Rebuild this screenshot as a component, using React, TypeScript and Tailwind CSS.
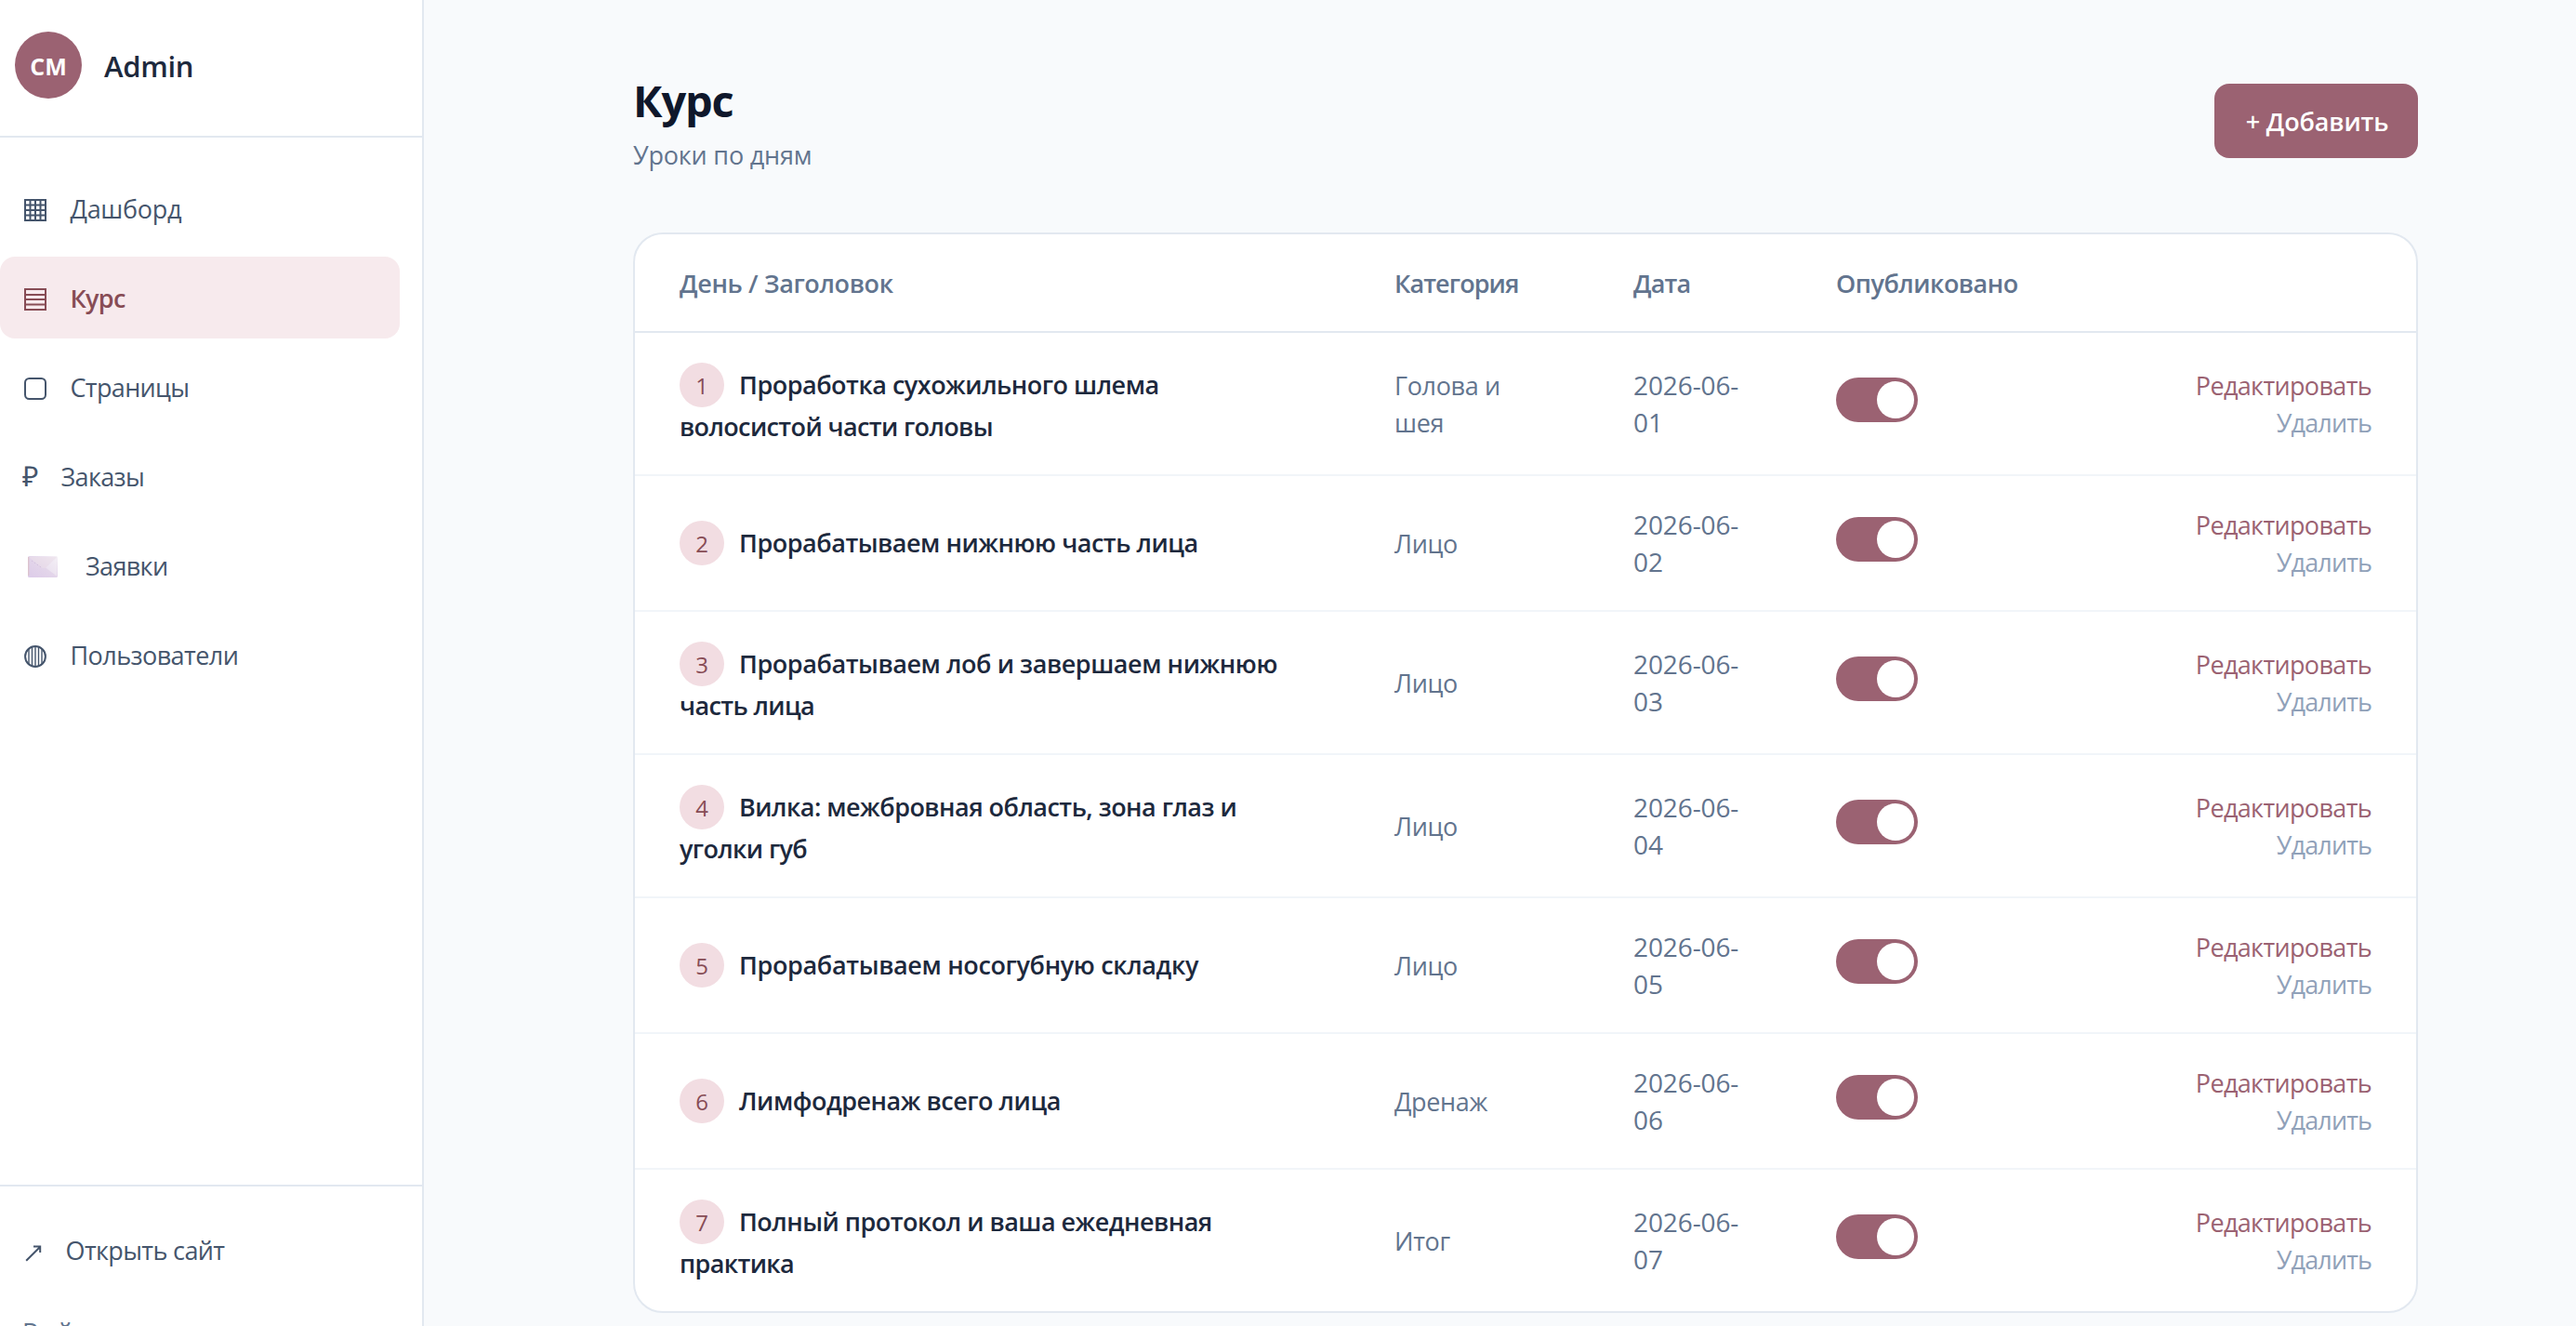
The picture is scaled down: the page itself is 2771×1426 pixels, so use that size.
import React from 'react';
import type { ReactNode } from 'react';

const GridIcon = () => (
  <svg width="24" height="24" viewBox="0 0 24 24" fill="none" stroke="currentColor" strokeWidth="2">
    <path d="M1 1H23V23H1ZM6.5 1V23M12 1V23M17.5 1V23M1 6.5H23M1 12H23M1 17.5H23" />
  </svg>
);

const RowsIcon = () => (
  <svg width="24" height="24" viewBox="0 0 24 24" fill="none" stroke="currentColor" strokeWidth="2">
    <path d="M1 1H23V23H1ZM1 7H23M1 12H23M1 17.5H23" />
  </svg>
);

const RoundedSquareIcon = () => (
  <svg width="24" height="24" viewBox="0 0 24 24" fill="none" stroke="currentColor" strokeWidth="2">
    <rect x="1" y="1" width="22" height="22" rx="4.5" />
  </svg>
);

const EnvelopeIcon = () => (
  <svg width="32" height="24" viewBox="0 0 32 24">
    <defs>
      <linearGradient id="env" x1="0" y1="1" x2="1" y2="0">
        <stop offset="0" stopColor="#dccbe9" />
        <stop offset="0.5" stopColor="#e3d5ea" />
        <stop offset="1" stopColor="#f6f1f7" />
      </linearGradient>
    </defs>
    <rect x="0" y="0" width="32" height="23" rx="1.5" fill="url(#env)" />
    <path d="M1 1L15 12.5Q17 13.6 19 12.5L31 1Z" fill="#ebe0ea" opacity="0.6" />
    <path d="M19 12.5L31 21.5V1.5Z" fill="#f4eff6" opacity="0.5" />
    <path d="M0.7 1V21" stroke="#dcc3cf" strokeWidth="1.4" />
    <path d="M4 5L15 12.6" stroke="#cdbbd8" strokeWidth="0.8" strokeDasharray="1.5 2" />
  </svg>
);

const StripedCircleIcon = () => (
  <svg width="24" height="24" viewBox="0 0 24 24" fill="none" stroke="currentColor">
    <circle cx="12" cy="12" r="10.9" strokeWidth="2" />
    <path d="M5 4V20M8.5 2V22M12 1V23M15.5 2V22M19 4V20" strokeWidth="1.4" />
  </svg>
);

const ArrowIcon = () => (
  <svg width="18" height="18" viewBox="0 0 18 18" fill="none" stroke="currentColor" strokeWidth="2">
    <path d="M1.2 16.8L15.8 2.2M9 1.6H16.2V8" />
  </svg>
);

type NavItemProps = {
  icon: ReactNode;
  box: string;
  label: string;
  tracking: string;
  active?: boolean;
};

function NavItem({ icon, box, label, tracking, active }: NavItemProps) {
  return (
    <a
      className={`flex h-[88px] items-center gap-[24.5px] rounded-2xl pl-6 ${
        active ? 'bg-[#f7eaed] font-semibold text-[#874c55]' : 'text-slate-600'
      }`}
    >
      <span className={`flex shrink-0 items-center ${box}`}>{icon}</span>
      <span className={`pt-0.5 whitespace-nowrap ${tracking}`}>{label}</span>
    </a>
  );
}

const wide = 'w-[27px] pl-0.5 pt-1';

const nav: NavItemProps[] = [
  { icon: <GridIcon />, box: wide, label: 'Дашборд', tracking: 'tracking-[-0.3px]' },
  { icon: <RowsIcon />, box: wide, label: 'Курс', tracking: 'tracking-[-0.7px]', active: true },
  { icon: <RoundedSquareIcon />, box: wide, label: 'Страницы', tracking: 'tracking-[-0.65px]' },
  { icon: '₽', box: 'w-[17px] text-[30px]', label: 'Заказы', tracking: 'tracking-[-0.65px]' },
  { icon: <EnvelopeIcon />, box: 'w-[43.5px] pl-1.5 pt-1', label: 'Заявки', tracking: 'tracking-[-0.65px]' },
  { icon: <StripedCircleIcon />, box: wide, label: 'Пользователи', tracking: 'tracking-[-0.57px]' },
];

type Lesson = { lines: [string, string?]; category: string[]; height: string; tracking: string };

const lessons: Lesson[] = [
  { lines: ['Проработка сухожильного шлема', 'волосистой части головы'], category: ['Голова и', 'шея'], height: 'h-[154px]', tracking: 'tracking-[-0.5px]' },
  { lines: ['Прорабатываем нижнюю часть лица'], category: ['Лицо'], height: 'h-[146px]', tracking: 'tracking-[-0.48px]' },
  { lines: ['Прорабатываем лоб и завершаем нижнюю', 'часть лица'], category: ['Лицо'], height: 'h-[154px]', tracking: 'tracking-[-0.44px]' },
  { lines: ['Вилка: межбровная область, зона глаз и', 'уголки губ'], category: ['Лицо'], height: 'h-[154px]', tracking: 'tracking-[-0.53px]' },
  { lines: ['Прорабатываем носогубную складку'], category: ['Лицо'], height: 'h-[146px]', tracking: 'tracking-[-0.36px]' },
  { lines: ['Лимфодренаж всего лица'], category: ['Дренаж'], height: 'h-[146px]', tracking: 'tracking-[-0.48px]' },
  { lines: ['Полный протокол и ваша ежедневная', 'практика'], category: ['Итог'], height: 'h-[152px]', tracking: 'tracking-[-0.52px]' },
];

const columns = 'grid grid-cols-[769px_257px_218px_288px_1fr] items-center';

function Toggle() {
  return (
    <span className="mb-2 flex h-12 w-[88px] items-center justify-end rounded-full bg-[#9b6272] pr-1">
      <span className="size-10 rounded-full bg-white" />
    </span>
  );
}

function LessonRow({ lesson, index }: { lesson: Lesson; index: number }) {
  const day = index + 1;
  return (
    <div className={`${columns} ${lesson.height} border-b-2 border-slate-100 last:border-b-0`}>
      <div className="pl-12 font-semibold whitespace-nowrap text-slate-800">
        <div className={`flex h-12 items-center ${lesson.tracking}`}>
          <span className="mr-4 flex size-12 items-center justify-center rounded-full bg-[#f2dde2] pt-0.5 text-[24px] font-medium tracking-normal text-[#874c55]">
            {day}
          </span>
          {lesson.lines[0]}
        </div>
        {lesson.lines[1] && <div className="h-10 pt-px tracking-[-0.63px]">{lesson.lines[1]}</div>}
      </div>
      <div className="pt-0.5 pl-12 tracking-[-0.35px] text-slate-500">
        {lesson.category.map((part) => (
          <div key={part}>{part}</div>
        ))}
      </div>
      <div className="pl-12 text-[28px] tracking-[-0.1px] text-slate-500">
        <div>2026-06-</div>
        <div>0{day}</div>
      </div>
      <div className="pl-12">
        <Toggle />
      </div>
      <div className="pt-0.5 pr-12 text-right">
        <div className="tracking-[-0.65px] text-[#9b6272]">Редактировать</div>
        <div className="tracking-[-0.9px] text-slate-400">Удалить</div>
      </div>
    </div>
  );
}

export default function App() {
  return (
    <div className="flex h-[1426px] w-full overflow-hidden bg-slate-50 font-['Open_Sans',sans-serif] text-[27px] leading-10">
      <aside className="flex h-full w-[456px] shrink-0 flex-col border-r-2 border-slate-200 bg-white">
        <div className="flex h-[148px] shrink-0 items-start gap-6 border-b-2 border-slate-200 pt-[34px] pl-4">
          <div className="flex size-[72px] items-center justify-center rounded-full bg-[#9b6272] pt-0.5 text-[25px] font-bold text-white">
            CM
          </div>
          <div className="flex h-[72px] items-center pt-0.5 text-[31px] font-semibold tracking-[-0.3px] text-slate-800">
            Admin
          </div>
        </div>
        <nav className="flex flex-1 flex-col gap-2 pt-8 pr-6">
          {nav.map((item) => (
            <NavItem key={item.label} {...item} />
          ))}
        </nav>
        <div className="h-[152px] shrink-0 overflow-hidden border-t-2 border-slate-200 pt-6 pr-6">
          <NavItem icon={<ArrowIcon />} box="w-[22px] pl-[3px] pt-2" label="Открыть сайт" tracking="tracking-[-0.62px]" />
          <button className="block h-[88px] pt-0.5 pl-6 tracking-[-0.3px] text-slate-500">Выйти</button>
        </div>
      </aside>

      <main className="w-[2145px] shrink-0 pt-[74px] pl-[225px]">
        <header className="mb-16 flex items-center justify-between">
          <div>
            <h1 className="h-[69px] text-[47px] leading-[68px] font-bold tracking-[-1.2px] text-slate-900">Курс</h1>
            <p className="mt-1 -mb-px tracking-[-0.2px] text-slate-500">Уроки по дням</p>
          </div>
          <button className="h-20 w-[219px] rounded-2xl bg-[#9b6272] pt-0.5 pl-0.5 font-semibold tracking-[-0.15px] text-white">
            + Добавить
          </button>
        </header>

        <section className="overflow-hidden rounded-[32px] border-2 border-slate-200 bg-white">
          <div className={`${columns} h-[106px] border-b-2 border-slate-200 pt-0.5 font-semibold text-slate-500`}>
            <div className="pl-12 tracking-[-0.36px]">День / Заголовок</div>
            <div className="pl-12 tracking-[-0.9px]">Категория</div>
            <div className="pl-12 tracking-[-0.83px]">Дата</div>
            <div className="pl-12 tracking-[-0.5px]">Опубликовано</div>
          </div>
          <div>
            {lessons.map((lesson, i) => (
              <LessonRow key={lesson.lines[0]} lesson={lesson} index={i} />
            ))}
          </div>
        </section>
      </main>
    </div>
  );
}
